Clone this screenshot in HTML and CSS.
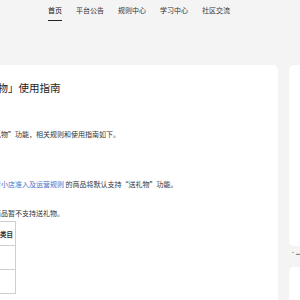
FILE: index.html
```html
<!DOCTYPE html>
<html lang="zh-CN">
<head>
  <meta charset="UTF-8" />
  <meta name="viewport" content="width=device-width, initial-scale=1.0"/>
  <title>「送礼物」使用指南</title>
  <link rel="stylesheet" href="styles.css">
</head>
<body>

  <header class="topnav">
    <nav class="tabs">
      <a class="tab active" href="#">首页</a>
      <a class="tab" href="#">平台公告</a>
      <a class="tab" href="#">规则中心</a>
      <a class="tab" href="#">学习中心</a>
      <a class="tab" href="#">社区交流</a>
    </nav>
  </header>

  <div class="layout">
    <article class="doc">
      <h1 class="doc-title">「送礼物」使用指南</h1>
      <p class="doc-date">2023-02-17</p>

      <p class="para lead">上线“送礼物”功能，相关规则和使用指南如下。</p>

      <p class="para gap">凡符合<a class="link" href="#">抖音小店准入及运营规则</a> 的商品将默认支持“送礼物”功能。</p>
      <p class="para">以下类目商品暂不支持送礼物。</p>

      <table class="cats">
        <tr><th>一级类目</th></tr>
        <tr><td></td></tr>
        <tr><td></td></tr>
      </table>
    </article>

    <aside class="side">
      <div class="side-card top"></div>
      <p class="side-note">▪ ▬▬</p>
      <div class="side-card"></div>
    </aside>
  </div>

</body>
</html>
```

FILE: styles.css
```css
html, body {
  overflow: hidden;
}

body {
  margin: 0;
  background: #f4f4f4;
  font-family: "Noto Sans CJK SC", "Noto Sans", sans-serif;
  color: #333;
}

.topnav {
  padding: 3px 0 0 48px;
}

.tabs {
  display: flex;
  gap: 14px;
}

.tab {
  display: block;
  font-size: 7px;
  line-height: 14px;
  padding-bottom: 3px;
  color: #333;
  text-decoration: none;
  border-bottom: 1px solid transparent;
}

.tab.active {
  color: #111;
  border-bottom-color: #222;
}

.layout {
  display: flex;
  gap: 11px;
  margin: 44px 0 0 -60px;
  width: 600px;
}

.doc {
  width: 338px;
  flex: none;
  box-sizing: border-box;
  background: white;
  border-radius: 5px;
  padding: 15px 0 10px 26px;
  min-height: 260px;
}

.doc-title {
  margin: 0;
  font-size: 10.5px;
  line-height: 16px;
  font-weight: normal;
  color: #222;
}

.doc-date {
  margin: 4px 0 0;
  font-size: 5px;
  line-height: 8px;
  color: #999;
}

.para {
  margin: 0;
  font-size: 7px;
  line-height: 12px;
  color: #333;
}

.lead {
  margin-top: 20px;
}

.gap {
  margin-top: 38px;
}

.para + .para:not(.gap) {
  margin-top: 17px;
}

.link {
  color: #4b6dc4;
  text-decoration: none;
}

.cats {
  margin-top: 2px;
  border-collapse: collapse;
  width: 50px;
}

.cats th, .cats td {
  border: 1px solid #cfcfcf;
  height: 23px;
  padding: 0 2px;
  font-size: 6.5px;
  text-align: right;
}

.side {
  width: 200px;
  flex: none;
}

.side-card {
  background: white;
  border-radius: 5px;
  height: 180px;
}

.side-card.top {
  height: 181px;
}

.side-note {
  margin: 3px 0 10px 2px;
  font-size: 4px;
  line-height: 8px;
  color: #888;
}
```
